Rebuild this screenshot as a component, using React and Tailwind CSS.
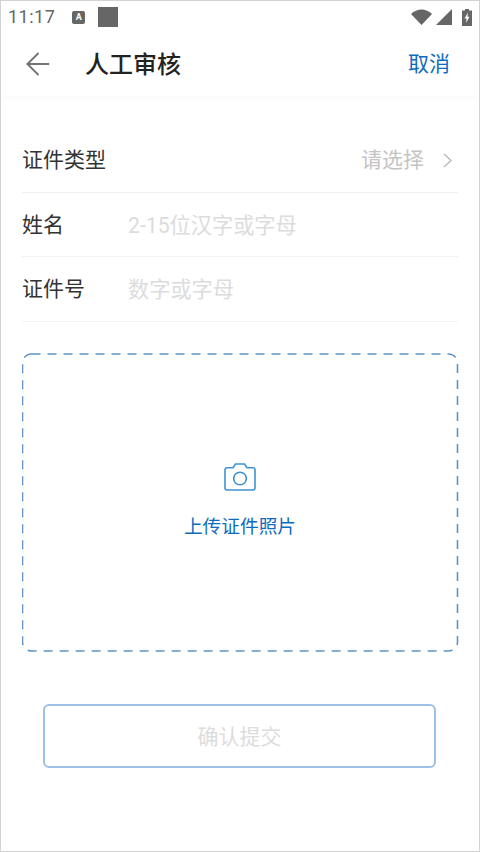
import React from 'react';
import { ArrowLeft } from 'lucide-react';

const FONT = "font-['Roboto','Noto_Sans_CJK_SC',sans-serif]";

const FormRow = ({ label, placeholder, rowClass }) => (
  <div className={`flex items-center border-b border-[#f3f3f3] ${rowClass}`}>
    <span className="w-[106px] text-[21px] text-[#333333]">{label}</span>
    <span className="text-[21.2px] text-[#dcdcdc]">{placeholder}</span>
  </div>
);

const StatusBar = () => (
  <div className="flex h-[30px] items-center justify-between pl-[7px] pr-[7px] pt-[2px] text-[#666666]">
    <div className="flex items-center">
      <span className="text-[18px] leading-none tracking-[0.5px]">11:17</span>
      <span className="ml-[17px] flex h-[13px] w-[13px] items-center justify-center rounded-[2px] bg-[#666666] text-[9px] font-bold leading-none text-white">A</span>
      <span className="ml-[13px] h-[20px] w-[20px] bg-[#666666]" />
    </div>
    <div className="flex items-center gap-[4px]">
      <svg width="21" height="16" viewBox="0 0 21 16">
        <path d="M0 5 C6 -1 15 -1 21 5 L10.5 16 Z" fill="#666666" />
      </svg>
      <svg width="16" height="16" viewBox="0 0 16 16" className="mr-[6px]">
        <path d="M0 16 L16 0 V16 Z" fill="#666666" />
      </svg>
      <svg width="10" height="17" viewBox="0 0 10 17">
        <path d="M3 0 H7 V1.5 H10 V17 H0 V1.5 H3 Z" fill="#666666" />
        <path d="M6 3.5 L2.5 9.5 H4.6 L4 14 L7.5 7.8 H5.4 Z" fill="#ffffff" />
      </svg>
    </div>
  </div>
);

export default function App() {
  return (
    <div className={`flex h-[852px] w-[480px] flex-col overflow-hidden border border-[#d2d2d2] bg-white ${FONT}`}>
      <StatusBar />

      <div className="flex h-[65px] items-center justify-between pl-[19px] pr-[29px] shadow-[0_2px_6px_rgba(0,0,0,0.03)]">
        <div className="flex items-center">
          <ArrowLeft size={36} strokeWidth={1.3} className="text-[#757575]" />
          <span className="ml-[29px] pt-[2px] text-[24px] font-medium text-[#222222]">人工审核</span>
        </div>
        <span className="pt-[3px] text-[21px] text-[#0f6cbd]">取消</span>
      </div>

      <div className="mx-[21px] mt-[33px]">
        <div className="flex h-[64px] items-center justify-between border-b border-[#f0f0f0]">
          <span className="text-[21px] text-[#333333]">证件类型</span>
          <div className="flex items-center text-[#c4c4c4]">
            <span className="text-[21px]">请选择</span>
            <svg width="9" height="15" viewBox="0 0 9 15" fill="none" stroke="#b8b8b8" strokeWidth="1.3" className="ml-[19px] mr-[6px]">
              <path d="M1 1 L8 7.5 L1 14" />
            </svg>
          </div>
        </div>
        <FormRow label="姓名" placeholder="2-15位汉字或字母" rowClass="h-[64px] pt-[3px]" />
        <FormRow label="证件号" placeholder="数字或字母" rowClass="h-[65px] pt-[1px]" />

        <div className="relative mt-[31px] flex h-[299px] flex-col items-center justify-center">
          {/* dash spacing of the css border is too tight, so drawn */}
          <svg width="438" height="299" className="absolute inset-0">
            <rect x="0.5" y="1" width="435" height="297" rx="9" fill="none" stroke="#5f93c6" strokeWidth="1.6" strokeDasharray="9 7" />
          </svg>
          <svg width="32" height="28" viewBox="0 0 32 28" fill="none" stroke="#3d93d1" strokeWidth="1.6">
            <path d="M3 4.8 H9 L11.5 1 H20.5 L23 4.8 H29 A2 2 0 0 1 31 6.8 V25 A2 2 0 0 1 29 27 H3 A2 2 0 0 1 1 25 V6.8 A2 2 0 0 1 3 4.8 Z" />
            <circle cx="16" cy="15.5" r="6.3" />
          </svg>
          <span className="mt-[22px] text-[18.7px] text-[#0f6cbd]">上传证件照片</span>
        </div>

        <div className="ml-[21px] mr-[22px] mt-[52px] flex h-[64px] items-center justify-center rounded-[6px] border-2 border-[#9cc0e6] pt-[3px] text-[21px] text-[#dcdcdc]">
          确认提交
        </div>
      </div>
    </div>
  );
}
